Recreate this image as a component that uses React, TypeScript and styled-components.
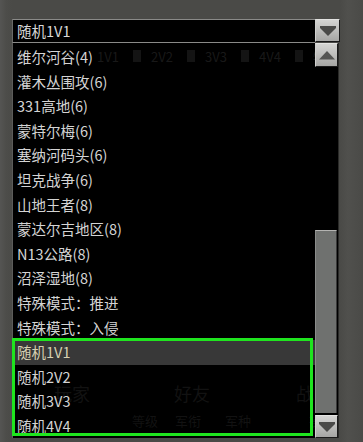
import React from "react";
import styled, { createGlobalStyle } from "styled-components";

const GlobalStyle = createGlobalStyle`
  html, body { margin: 0; padding: 0; background: #4a4a47; }
  body { font-family: "Noto Sans CJK SC", "Noto Sans", sans-serif; }
`;

const Page = styled.div`
  position: relative;
  width: 363px;
  height: 442px;
  overflow: hidden;
  background: linear-gradient(90deg, #555553 0px, #4d4d4a 6px, #4a4a47 12px, #4a4a47 340px, #50504d 348px, #4a4a47 363px);
`;

const Backdrop = styled.div`
  box-sizing: border-box;
  height: 442px;
  padding: 43px 24px 4px 12px;
`;

const Panel = styled.div`
  height: 100%;
  background: #000;
  display: flex;
  flex-direction: column;
  justify-content: space-between;
`;

const GhostRow = styled.div<{ $pad: number }>`
  display: flex;
  align-items: center;
  gap: 10px;
  padding-left: ${(p) => p.$pad}px;
  height: 26px;
  font-size: 13px;
  color: #262626;
  white-space: nowrap;
`;

const GhostBox = styled.span`
  width: 11px;
  height: 12px;
  background: #202020;
  margin-left: 4px;
`;

const GhostTabs = styled.div`
  display: grid;
  grid-template-columns: 120px 122px 40px;
  height: 30px;
  align-items: center;
  font-size: 18px;
  color: #1c1c1c;
  padding-left: 42px;
`;

const GhostHeaders = styled.div`
  display: grid;
  grid-template-columns: 43px 50px 84px 30px;
  height: 24px;
  align-items: center;
  font-size: 13px;
  color: #1c1c1c;
  padding-left: 120px;
  margin-bottom: 6px;
`;

const Dropdown = styled.div`
  position: absolute;
  left: 12px;
  top: 19px;
  width: 328px;
`;

const Combo = styled.div`
  display: flex;
  height: 24px;
`;

const ComboField = styled.div`
  flex: 1;
  box-sizing: border-box;
  background: #000;
  border-top: 1px solid #8a8a88;
  border-left: 1px solid #6a6a68;
  border-bottom: 1px solid #8a8a88;
  color: #d8d8d8;
  font-size: 14.5px;
  line-height: 22px;
  padding-left: 4px;
`;

const ArrowButton = styled.div<{ $w: number; $h: number }>`
  box-sizing: border-box;
  width: ${(p) => p.$w}px;
  height: ${(p) => p.$h}px;
  display: flex;
  align-items: center;
  justify-content: center;
  background: linear-gradient(180deg, #d4d4d2 0%, #bdbdbb 50%, #a6a6a4 100%);
  border: 1px solid #1a1a1a;
  border-top-color: #e4e4e2;
  border-left-color: #d0d0ce;
`;

const ListArea = styled.div`
  display: flex;
  height: 395px;
  border-left: 1px solid #5c5c5a;
  box-sizing: border-box;
  width: 327px;
`;

const Options = styled.div`
  position: relative;
  flex: 1;
  background: rgba(0, 0, 0, 0.35);
  padding-top: 2px;
`;

const Option = styled.div<{ $active?: boolean }>`
  height: 24.6px;
  line-height: 24.6px;
  padding-left: 4px;
  font-size: 14.5px;
  white-space: nowrap;
  color: ${(p) => (p.$active ? "#d6d0b2" : "#d4d4d4")};
  background: ${(p) => (p.$active ? "#383838" : "transparent")};
`;

const Highlight = styled.div`
  position: absolute;
  left: -1px;
  top: 295px;
  width: 301px;
  height: 98px;
  box-sizing: border-box;
  border: 3px solid #1fe51f;
  pointer-events: none;
`;

const Scrollbar = styled.div`
  width: 23px;
  display: flex;
  flex-direction: column;
  background: #000;
  border-right: 1px solid #2a2a28;
`;

const Track = styled.div`
  flex: 1;
  display: flex;
  flex-direction: column;
  padding: 0 1px 2px 0;
`;

const TrackSpace = styled.div`
  height: 163px;
`;

const Thumb = styled.div`
  flex: 1;
  background: #6f716f;
  border-top: 1px solid #b4b4b2;
  border-left: 1px solid #8a8c8a;
  border-right: 1px solid #3a3a3a;
`;

const UpIcon = () => (
  <svg width="20" height="12" viewBox="0 0 20 12">
    <polygon points="2,10.5 18,10.5 10,2" fill="#555553" />
  </svg>
);

const DownIcon = () => (
  <svg width="20" height="12" viewBox="0 0 20 12">
    <polygon points="2,1 18,1 18,3 10,11 2,3" fill="#4a4a48" />
  </svg>
);

const maps = [
  "维尔河谷(4)",
  "灌木丛围攻(6)",
  "331高地(6)",
  "蒙特尔梅(6)",
  "塞纳河码头(6)",
  "坦克战争(6)",
  "山地王者(8)",
  "蒙达尔吉地区(8)",
  "N13公路(8)",
  "沼泽湿地(8)",
  "特殊模式：推进",
  "特殊模式：入侵",
  "随机1V1",
  "随机2V2",
  "随机3V3",
  "随机4V4",
];

export default function App() {
  return (
    <>
      <GlobalStyle />
      <Page>
        <Backdrop>
          <Panel>
            <GhostRow $pad={85}>
              <span>1V1</span>
              <GhostBox />
              <span>2V2</span>
              <GhostBox />
              <span>3V3</span>
              <GhostBox />
              <span>4V4</span>
              <GhostBox />
              <span>特殊</span>
            </GhostRow>
            <div>
              <GhostTabs>
                <span>玩家</span>
                <span>好友</span>
                <span>战队</span>
              </GhostTabs>
              <GhostHeaders>
                <span>等级</span>
                <span>军衔</span>
                <span>军种</span>
                <span>操</span>
              </GhostHeaders>
            </div>
          </Panel>
        </Backdrop>
        <Dropdown>
          <Combo>
            <ComboField>随机1V1</ComboField>
            <ArrowButton $w={25} $h={23}>
              <DownIcon />
            </ArrowButton>
          </Combo>
          <ListArea>
            <Options>
              {maps.map((m, i) => (
                <Option key={m} $active={i === 12}>
                  {m}
                </Option>
              ))}
              <Highlight />
            </Options>
            <Scrollbar>
              <ArrowButton $w={23} $h={24}>
                <UpIcon />
              </ArrowButton>
              <Track>
                <TrackSpace />
                <Thumb />
              </Track>
              <ArrowButton $w={23} $h={23}>
                <DownIcon />
              </ArrowButton>
            </Scrollbar>
          </ListArea>
        </Dropdown>
      </Page>
    </>
  );
}
